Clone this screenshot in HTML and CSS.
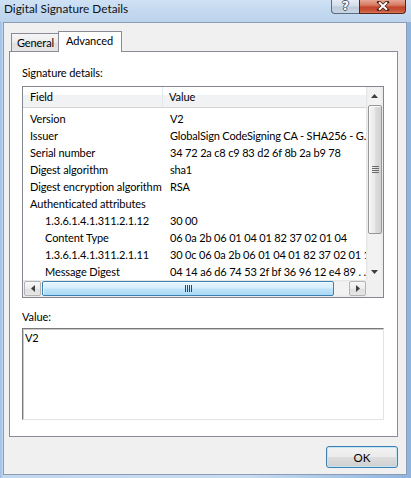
FILE: index.html
```html
<!DOCTYPE html>
<html>
<head>
<meta charset="utf-8">
<link rel="stylesheet" href="styles.css">
</head>
<body>
<div class="window">
  <div class="titlebar">
    <span class="title">Digital Signature Details</span>
    <div class="caption">
      <div class="cap-btn help"><span class="qmark">?</span></div>
      <div class="cap-btn close">
        <svg width="14" height="10" viewBox="0 0 14 10"><path d="M3 1.2 L11 8.8 M11 1.2 L3 8.8" stroke="#4b1d14" stroke-width="3.6" stroke-linecap="square" fill="none"/><path d="M3 1.2 L11 8.8 M11 1.2 L3 8.8" stroke="#ffffff" stroke-width="2" fill="none"/></svg>
      </div>
    </div>
  </div>
  <div class="client">
    <div class="tabs">
      <div class="tab">General</div>
      <div class="tab active">Advanced</div>
    </div>
    <div class="panel">
      <div class="label">Signature details:</div>
      <div class="listview">
        <div class="lv-content">
          <div class="lv-header">
            <div class="hcol field">Field</div>
            <div class="hcol value">Value</div>
          </div>
          <div class="lv-rows">
            <div class="row"><span class="f">Version</span><span class="v">V2</span></div>
            <div class="row"><span class="f">Issuer</span><span class="v">GlobalSign CodeSigning CA - SHA256 - G.</span></div>
            <div class="row"><span class="f">Serial number</span><span class="v">34 72 2a c8 c9 83 d2 6f 8b 2a b9 78</span></div>
            <div class="row"><span class="f">Digest algorithm</span><span class="v">sha1</span></div>
            <div class="row"><span class="f">Digest encryption algorithm</span><span class="v">RSA</span></div>
            <div class="row"><span class="f">Authenticated attributes</span><span class="v"></span></div>
            <div class="row child"><span class="f">1.3.6.1.4.1.311.2.1.12</span><span class="v">30 00</span></div>
            <div class="row child"><span class="f">Content Type</span><span class="v">06 0a 2b 06 01 04 01 82 37 02 01 04</span></div>
            <div class="row child"><span class="f">1.3.6.1.4.1.311.2.1.11</span><span class="v">30 0c 06 0a 2b 06 01 04 01 82 37 02 01 1</span></div>
            <div class="row child"><span class="f">Message Digest</span><span class="v">04 14 a6 d6 74 53 2f bf 36 96 12 e4 89 . .</span></div>
          </div>
        </div>
        <div class="vscroll">
          <div class="sb-btn"><svg width="7" height="4" viewBox="0 0 7 4"><polygon points="3.5,0 7,4 0,4" fill="#404040"/></svg></div>
          <div class="vthumb"><svg width="7" height="7" viewBox="0 0 7 7"><path d="M0 0.5H7M0 2.5H7M0 4.5H7M0 6.5H7" stroke="#6b6b6b" stroke-width="1"/></svg></div>
          <div class="vtrack"></div>
          <div class="sb-btn"><svg width="7" height="4" viewBox="0 0 7 4"><polygon points="0,0 7,0 3.5,4" fill="#404040"/></svg></div>
        </div>
        <div class="hscroll">
          <div class="sb-btn hbtn"><svg width="4" height="7" viewBox="0 0 4 7"><polygon points="0,3.5 4,0 4,7" fill="#404040"/></svg></div>
          <div class="hthumb"><svg width="7" height="7" viewBox="0 0 7 7"><path d="M0.5 0V7M2.5 0V7M4.5 0V7M6.5 0V7" stroke="#1f4b70" stroke-width="1"/></svg></div>
          <div class="htrack"></div>
          <div class="sb-btn hbtn"><svg width="4" height="7" viewBox="0 0 4 7"><polygon points="0,0 4,3.5 0,7" fill="#404040"/></svg></div>
        </div>
        <div class="corner"></div>
      </div>
      <div class="label value-label">Value:</div>
      <div class="textbox">V2</div>
    </div>
    <div class="footer">
      <button class="ok">OK</button>
    </div>
  </div>
</div>
</body>
</html>
```
FILE: styles.css
```css
* { box-sizing: border-box; }
html, body { margin: 0; padding: 0; }
body {
  width: 411px;
  height: 478px;
  overflow: hidden;
  font-family: Lato, "Noto Sans", sans-serif;
  font-size: 11px;
  letter-spacing: -0.1px;
  color: #000;
  background: linear-gradient(to right, #9dbde3 0px, #c3d8ef 3px, #c8dcf1 60%, #8fb4de 100%);
}
.window {
  display: flex;
  flex-direction: column;
  height: 478px;
}
.titlebar {
  height: 22px;
  display: flex;
  align-items: flex-start;
  background: linear-gradient(to bottom, #cfe1f4 0%, #c2d8ef 60%, #bcd3ec 100%);
}
.title {
  padding-left: 4px;
  line-height: 18px;
  font-size: 11.8px;
  letter-spacing: 0;
  color: #111;
}
.caption {
  margin-left: auto;
  margin-right: 5px;
  display: flex;
}
.cap-btn {
  height: 14px;
  display: flex;
  align-items: center;
  justify-content: center;
  border: 1px solid #5a6b82;
  border-top: none;
}
.help {
  width: 28px;
  border-radius: 0 0 0 4px;
  background: linear-gradient(to bottom, #e4ebf3 0%, #d3dde9 45%, #bccbdc 55%, #c9d6e4 100%);
  border-right: none;
}
.qmark {
  font-family: "DejaVu Sans", sans-serif;
  font-weight: bold;
  font-size: 12px;
  line-height: 12px;
  color: #fff;
  text-shadow: 1px 0 0 #4a5a70, -1px 0 0 #4a5a70, 0 1px 0 #4a5a70, 0 -1px 0 #4a5a70;
  margin-top: -2px;
}
.close {
  width: 47px;
  border-radius: 0 0 4px 0;
  border-color: #5a2518;
  background: linear-gradient(to bottom, #e6a796 0%, #d77a62 40%, #c2452b 55%, #c9563a 85%, #d8795b 100%);
}
.close svg { margin-top: -1px; }

.client {
  flex: 1;
  margin: 0 4px 3px 3px;
  border: 1px solid #8a9db4;
  background: #f0f0f0;
  padding: 8px 8px 6px 5px;
  display: flex;
  flex-direction: column;
}
.tabs {
  display: flex;
  align-items: flex-end;
  height: 20px;
  padding-left: 2px;
  position: relative;
  z-index: 1;
}
.tab {
  height: 18px;
  width: 48px;
  border: 1px solid #898c95;
  border-bottom: none;
  background: linear-gradient(to bottom, #f6f6f6 0%, #ececec 50%, #e0e0e0 51%, #e6e6e6 100%);
  padding-left: 5px;
  line-height: 18px;
  white-space: nowrap;
}
.tab.active {
  height: 21px;
  width: 64px;
  margin-left: -1px;
  margin-bottom: -1px;
  background: #fff;
  padding-left: 7px;
  line-height: 18px;
}

.panel {
  height: 386px;
  background: #fff;
  border: 1px solid #898c95;
  padding: 13px 13px 16px 12px;
  display: flex;
  flex-direction: column;
}
.label {
  line-height: 16px;
  height: 16px;
  white-space: nowrap;
}
.listview {
  margin-top: 5px;
  height: 212px;
  border: 1px solid #828790;
  display: grid;
  grid-template-columns: 1fr 17px;
  grid-template-rows: 1fr 17px;
  overflow: hidden;
}
.lv-content {
  overflow: hidden;
  min-width: 0;
}
.lv-header {
  height: 21px;
  display: flex;
  border-bottom: 1px solid #d5d5d5;
  background: linear-gradient(to bottom, #ffffff 0%, #ffffff 40%, #f1f2f4 40%, #f1f2f4 100%);
}
.hcol {
  line-height: 20px;
  white-space: nowrap;
}
.hcol.field {
  width: 140px;
  padding-left: 7px;
  border-right: 1px solid #e3e8ee;
}
.hcol.value { padding-left: 6px; }
.lv-rows { padding-top: 2px; }
.row {
  display: flex;
  height: 17px;
  line-height: 17px;
  white-space: nowrap;
}
.row .f {
  flex: none;
  width: 140px;
  padding-left: 7px;
  overflow: hidden;
}
.row.child .f { padding-left: 22px; }
.row .v {
  flex: none;
  padding-left: 7px;
  letter-spacing: -0.17px;
}

.vscroll {
  display: flex;
  flex-direction: column;
  background: linear-gradient(to right, #e2e2e2 0px, #f2f2f2 2px, #f2f2f2 14px, #e9e9e9 17px);
}
.sb-btn {
  height: 17px;
  flex: none;
  display: flex;
  align-items: center;
  justify-content: center;
}
.vthumb {
  height: 129px;
  margin: 1px 1px 0 2px;
  border: 1px solid #979797;
  border-radius: 2px;
  background: linear-gradient(to right, #f4f4f4 0%, #ebebeb 45%, #dcdcdc 55%, #d2d2d2 100%);
  box-shadow: inset 1px 1px 0 #fbfbfb;
  display: flex;
  align-items: center;
  justify-content: center;
}
.vtrack { flex: 1; }

.hscroll {
  display: flex;
  align-items: stretch;
  background: linear-gradient(to bottom, #e2e2e2 0px, #f2f2f2 2px, #f2f2f2 14px, #e9e9e9 17px);
  min-width: 0;
}
.hbtn {
  width: 17px;
  margin: 1px 0;
  height: auto;
  border: 1px solid #b4b4b4;
  border-radius: 2px;
  background: linear-gradient(to bottom, #f8f8f8 0%, #ececec 50%, #dfdfdf 51%, #e6e6e6 100%);
}
.hbtn:first-child { margin-left: 1px; }
.hthumb {
  width: 292px;
  margin: 1px 0 1px 1px;
  border: 1px solid #3c7fb1;
  border-radius: 2px;
  background: linear-gradient(to bottom, #e6f5fd 0%, #d5eefc 45%, #bfe4f9 55%, #a9d9f4 100%);
  box-shadow: inset 1px 1px 0 #f3fbff;
  display: flex;
  align-items: center;
  justify-content: center;
}
.htrack { flex: 1; }
.corner { background: #f0f0f0; }

.value-label { margin-top: 11px; }
.textbox {
  margin-top: 3px;
  height: 92px;
  border: 1px solid;
  border-color: #7a7a7a #e3e3e3 #e3e3e3 #7a7a7a;
  box-shadow: inset 1px 1px 0 #c9c9c9;
  padding: 1px 2px;
  line-height: 16px;
  background: #fff;
}

.footer {
  margin-top: 9px;
  display: flex;
  justify-content: flex-end;
}
.ok {
  width: 72px;
  height: 22px;
  margin: 0;
  padding: 0;
  font-family: inherit;
  font-size: 11.5px;
  color: #000;
  border: 1px solid #3c7fb1;
  border-radius: 3px;
  background: linear-gradient(to bottom, #f2f2f2 0%, #ebebeb 50%, #dddddd 51%, #cfcfcf 100%);
  box-shadow: inset 0 0 0 1px #c4e5f6;
}
```
